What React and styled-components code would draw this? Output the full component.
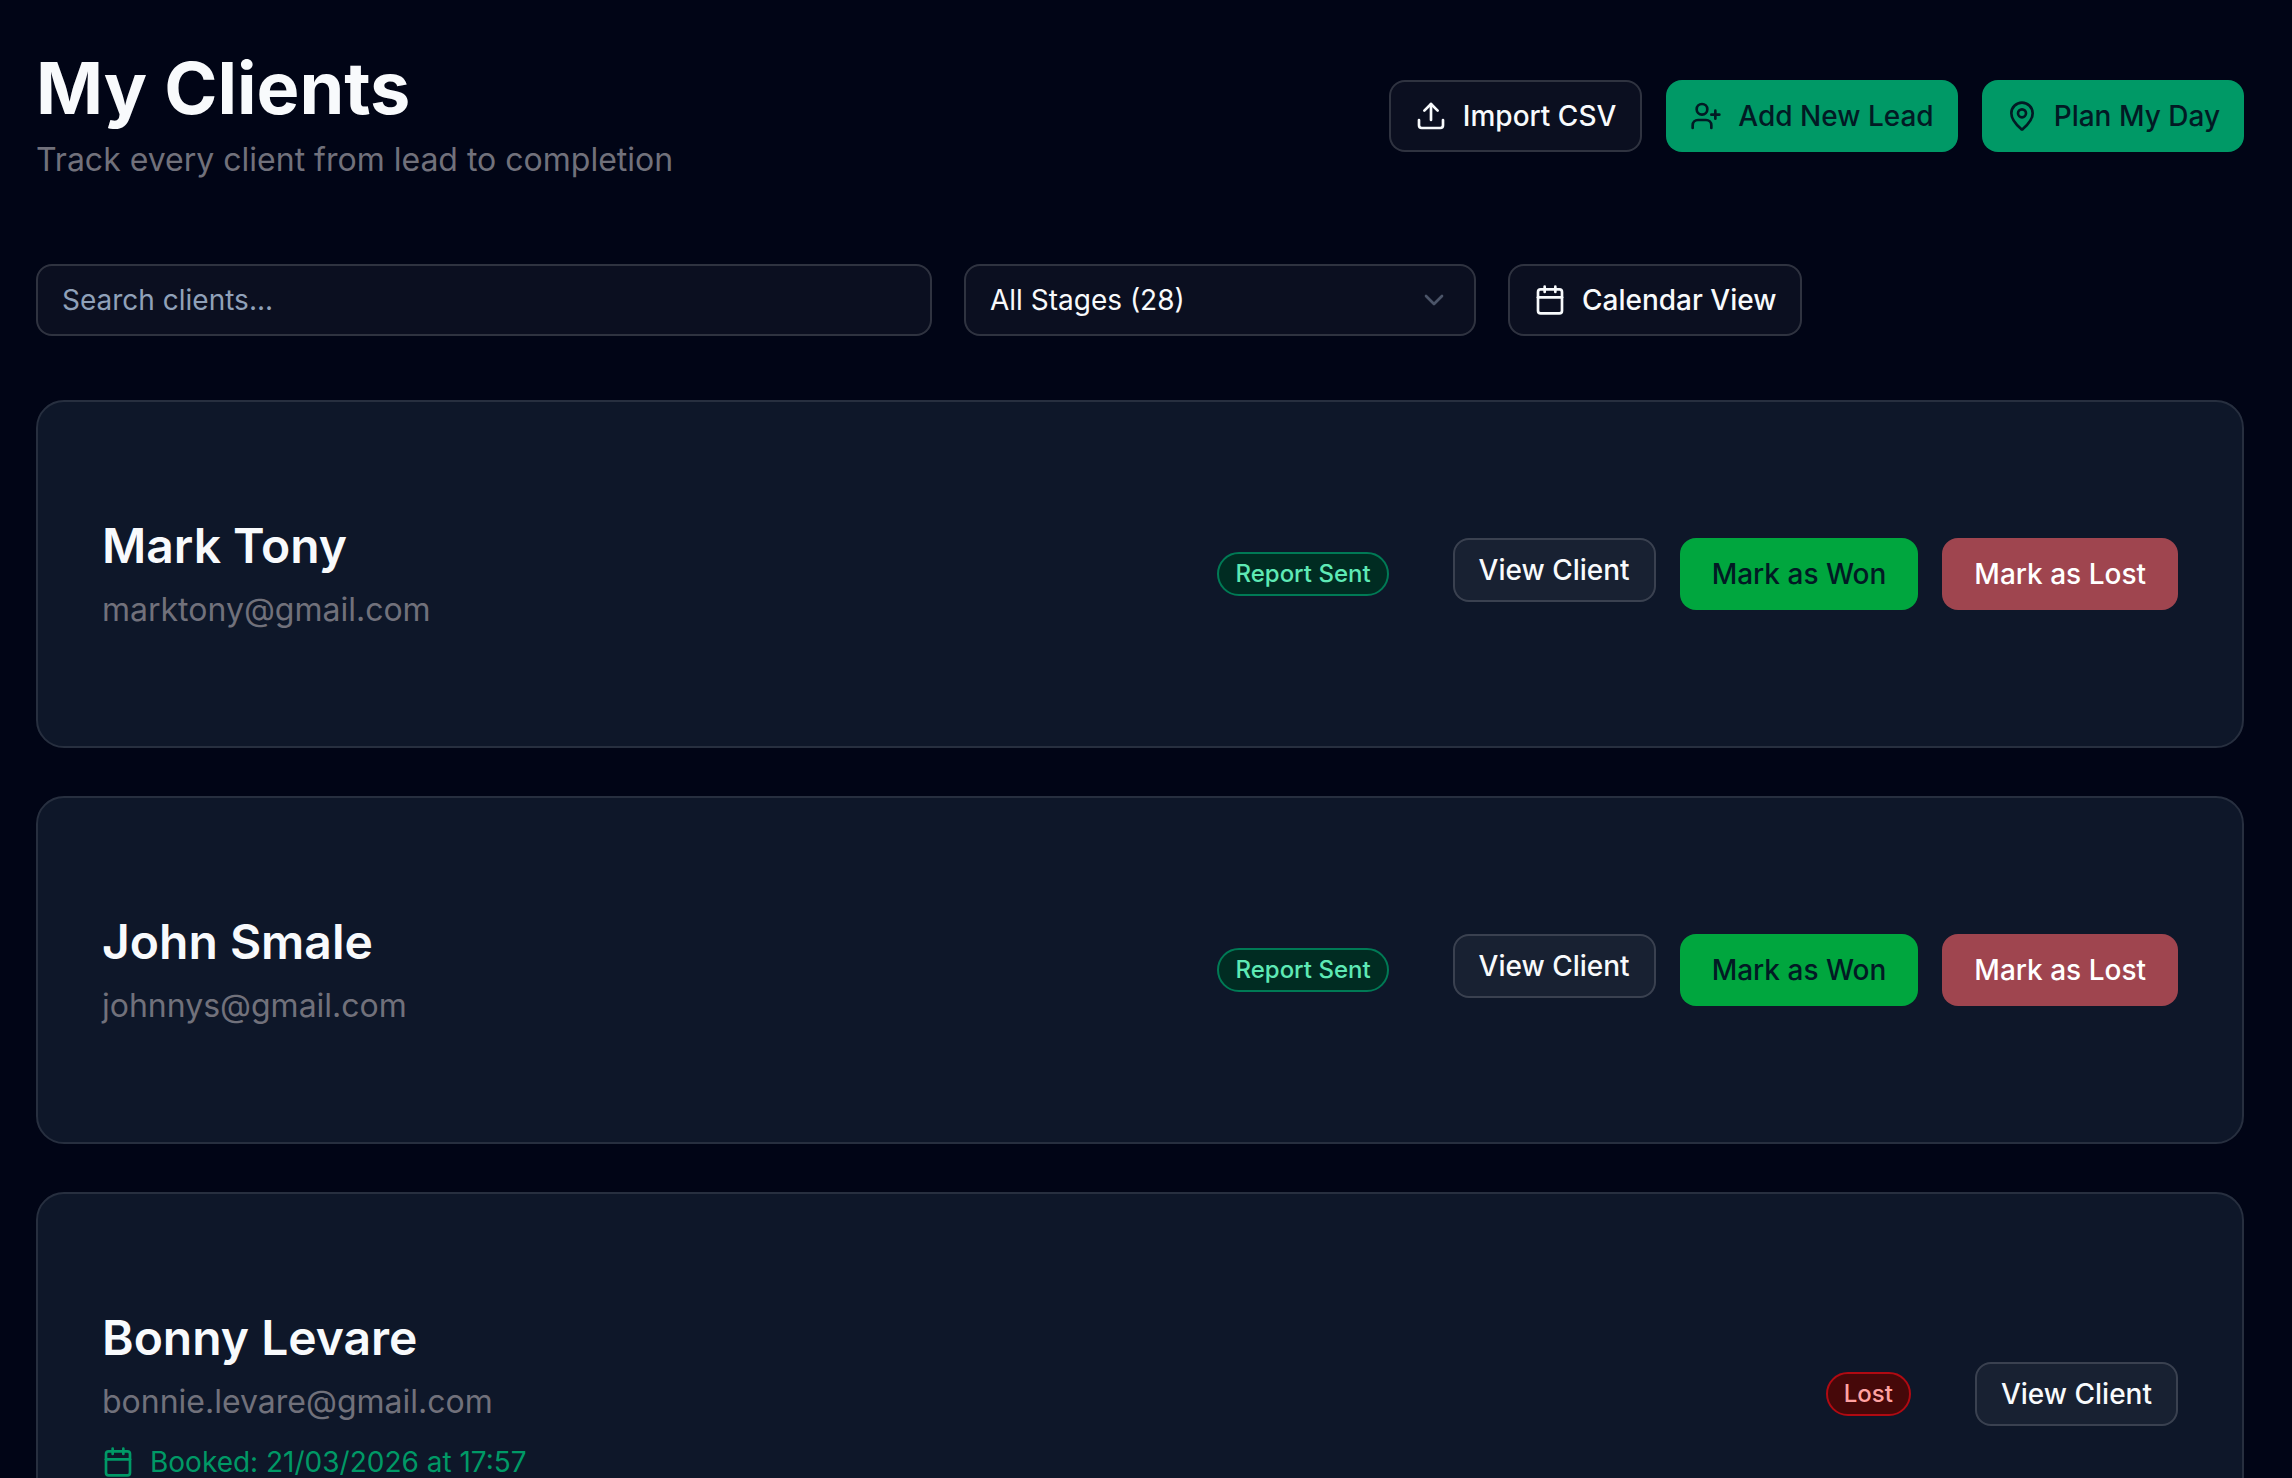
import React, { useState } from "react";
import styled, { createGlobalStyle, css } from "styled-components";
import { Calendar, ChevronDown, MapPin, Upload, UserPlus } from "lucide-react";

const clients = [
  {
    id: 1,
    name: "Mark Tony",
    email: "marktony@gmail.com",
    stage: "Report Sent",
    open: true,
  },
  {
    id: 2,
    name: "John Smale",
    email: "johnnys@gmail.com",
    stage: "Report Sent",
    open: true,
  },
  {
    id: 3,
    name: "Bonny Levare",
    email: "bonnie.levare@gmail.com",
    stage: "Lost",
    booked: "21/03/2026 at 17:57",
    open: false,
  },
];

function ClientCard({ client }) {
  return (
    <Card>
      <div>
        <ClientName>{client.name}</ClientName>
        <Email>{client.email}</Email>
        {client.booked && (
          <Booked>
            <Calendar size={32} />
            Booked: {client.booked}
          </Booked>
        )}
      </div>
      <CardSide>
        <Badge $lost={client.stage === "Lost"}>{client.stage}</Badge>
        <CardActions>
          <Button $variant="outline" $small>
            View Client
          </Button>
          {client.open && (
            <>
              <Button $variant="won">Mark as Won</Button>
              <Button $variant="lost">Mark as Lost</Button>
            </>
          )}
        </CardActions>
      </CardSide>
    </Card>
  );
}

function App() {
  const [search, setSearch] = useState("");
  const [stage, setStage] = useState("all");

  const shown = clients.filter(
    (client) =>
      client.name.toLowerCase().includes(search.toLowerCase()) &&
      (stage === "all" || client.stage === stage)
  );

  return (
    <React.Fragment>
      <GlobalStyle />
      <Page>
        <Header>
          <div>
            <Title>My Clients</Title>
            <Subtitle>Track every client from lead to completion</Subtitle>
          </div>
          <HeaderActions>
            <Button $variant="outline" $icon>
              <Upload size={32} />
              Import CSV
            </Button>
            <Button $variant="primary" $icon>
              <UserPlus size={32} />
              Add New Lead
            </Button>
            <Button $variant="primary" $icon>
              <MapPin size={32} />
              Plan My Day
            </Button>
          </HeaderActions>
        </Header>
        <Filters>
          <SearchInput
            type="text"
            aria-label="Search clients"
            placeholder="Search clients..."
            value={search}
            onChange={(e) => setSearch(e.target.value)}
          />
          <SelectWrap>
            <StageSelect
              aria-label="Stage"
              value={stage}
              onChange={(e) => setStage(e.target.value)}
            >
              <option value="all">All Stages (28)</option>
              <option value="Report Sent">Report Sent</option>
              <option value="Lost">Lost</option>
            </StageSelect>
            <ChevronDown size={32} />
          </SelectWrap>
          <Button $variant="outline" $icon>
            <Calendar size={32} />
            Calendar View
          </Button>
        </Filters>
        <ClientList>
          {shown.map((client) => (
            <ClientCard key={client.id} client={client} />
          ))}
        </ClientList>
      </Page>
    </React.Fragment>
  );
}

const GlobalStyle = createGlobalStyle`
  * {
    box-sizing: border-box;
  }
  html {
    background: #010516;
    scrollbar-width: none;
  }
  body {
    margin: 0;
    background: #010516;
    color: #f8fafc;
    font-family: Inter, "Liberation Sans", sans-serif;
    font-size: 28px;
    line-height: 40px;
  }
  h1, h2, p {
    margin: 0;
  }
`;

const Page = styled.main`
  padding: 48px 48px 48px 36px;
`;

const Header = styled.header`
  display: flex;
  align-items: center;
  justify-content: space-between;
  margin-bottom: 80px;
`;

const Title = styled.h1`
  font-size: 72px;
  font-weight: 700;
  line-height: 80px;
`;

const Subtitle = styled.p`
  margin-top: 8px;
  color: #71717b;
  font-size: 32px;
  line-height: 48px;
`;

const HeaderActions = styled.div`
  display: flex;
  gap: 24px;
`;

const outline = css`
  border: 2px solid rgba(255, 255, 255, 0.15);
  background: rgba(255, 255, 255, 0.045);
  color: #f8fafc;
`;

const variants = {
  outline,
  primary: css`
    background: #009966;
    color: #021a24;
  `,
  won: css`
    background: #00a63e;
    color: #021a24;
  `,
  lost: css`
    background: #9f454f;
    color: #ffffff;
  `,
};

const Button = styled.button`
  display: inline-flex;
  align-items: center;
  justify-content: center;
  gap: 16px;
  height: ${(props) => (props.$small ? "64px" : "72px")};
  padding: 0 ${(props) => (props.$small || props.$icon ? "24px" : "32px")};
  border: none;
  border-radius: 16px;
  font-family: inherit;
  font-size: 28px;
  font-weight: 500;
  line-height: 40px;
  white-space: nowrap;
  cursor: pointer;
  ${(props) => variants[props.$variant]}
`;

const Filters = styled.div`
  display: flex;
  gap: 32px;
  margin-bottom: 64px;
`;

const SearchInput = styled.input`
  ${outline}
  width: 100%;
  max-width: 896px;
  height: 72px;
  padding: 0 24px;
  border-radius: 16px;
  outline: none;
  font-family: inherit;
  font-size: 28px;
  &::placeholder {
    color: #90a1b9;
    opacity: 1;
  }
`;

const SelectWrap = styled.div`
  display: grid;
  align-items: center;
  flex: 0 0 512px;
  > * {
    grid-area: 1 / 1;
  }
  svg {
    justify-self: end;
    margin-right: 26px;
    color: #4b5468;
    pointer-events: none;
  }
`;

const StageSelect = styled.select`
  ${outline}
  appearance: none;
  width: 100%;
  height: 72px;
  padding: 0 24px;
  border-radius: 16px;
  font-family: inherit;
  font-size: 28px;
  font-weight: 400;
  option {
    background: #0f172b;
  }
`;

const ClientList = styled.section`
  display: flex;
  flex-direction: column;
  gap: 48px;
`;

const Card = styled.article`
  display: flex;
  align-items: center;
  justify-content: space-between;
  padding: 112px 64px;
  border: 2px solid #272f3f;
  border-radius: 28px;
  background: #0e1729;
`;

const ClientName = styled.h2`
  font-size: 48px;
  font-weight: 600;
  line-height: 64px;
`;

const Email = styled.p`
  margin-top: 8px;
  color: #71717b;
  font-size: 32px;
  line-height: 48px;
`;

const Booked = styled.p`
  display: flex;
  align-items: center;
  gap: 16px;
  margin-top: 16px;
  color: #009966;
`;

const CardSide = styled.div`
  display: flex;
  align-items: center;
  gap: 64px;
`;

const CardActions = styled.div`
  display: flex;
  align-items: flex-start;
  gap: 24px;
`;

const Badge = styled.span`
  padding: 4px 16px;
  border: 2px solid ${(props) => (props.$lost ? "#b00a12" : "#007a55")};
  border-radius: 22px;
  background: ${(props) => (props.$lost ? "#460809" : "#002c22")};
  color: ${(props) => (props.$lost ? "#ffa2a2" : "#5ee9b5")};
  font-size: 24px;
  font-weight: 500;
  line-height: 32px;
`;

export default App;
